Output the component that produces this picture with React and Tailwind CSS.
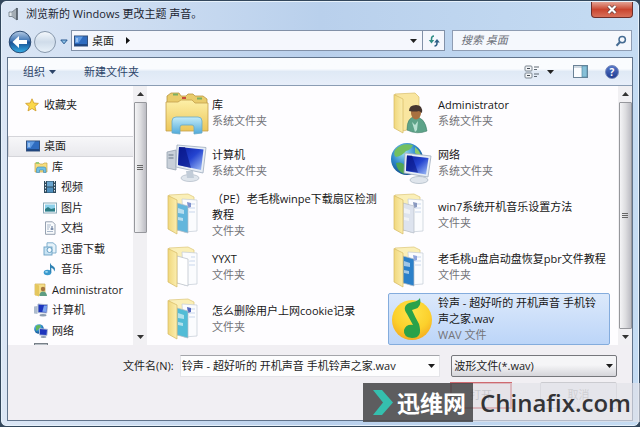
import React, { useState } from "react";

const treeItems = [
  { label: "桌面", icon: "desktop", indent: "pl-[17px]", active: true },
  { label: "库", icon: "library", indent: "pl-[26px]" },
  { label: "视频", icon: "video", indent: "pl-[35px]" },
  { label: "图片", icon: "picture", indent: "pl-[35px]" },
  { label: "文档", icon: "doc", indent: "pl-[35px]" },
  { label: "迅雷下载", icon: "download", indent: "pl-[35px]" },
  { label: "音乐", icon: "music", indent: "pl-[35px]" },
  { label: "Administrator", icon: "userSmall", indent: "pl-[26px]" },
  { label: "计算机", icon: "pcSmall", indent: "pl-[26px]" },
  { label: "网络", icon: "netSmall", indent: "pl-[26px]" },
];

const files = [
  { name: "库", type: "系统文件夹", icon: "libraries" },
  { name: "Administrator", type: "系统文件夹", icon: "user" },
  { name: "计算机", type: "系统文件夹", icon: "computer" },
  { name: "网络", type: "系统文件夹", icon: "network" },
  { name: "（PE）老毛桃winpe下载扇区检测教程", type: "文件夹", icon: "folderBlue" },
  { name: "win7系统开机音乐设置方法", type: "文件夹", icon: "folderGrey" },
  { name: "YYXT", type: "文件夹", icon: "folderPlain" },
  { name: "老毛桃u盘启动盘恢复pbr文件教程", type: "文件夹", icon: "folderDeep" },
  { name: "怎么删除用户上网cookie记录", type: "文件夹", icon: "folderCyan" },
  { name: "铃声 - 超好听的 开机声音 手机铃声之家.wav", type: "WAV 文件", icon: "wav" },
];

// Gradients shared by all of the icons
function IconDefs() {
  return (
    <svg width="0" height="0" className="absolute" aria-hidden="true">
      <defs>
        <linearGradient id="folderFront" x1="0" y1="0" x2="1" y2="0">
          <stop offset="0" stopColor="#f0d77c" />
          <stop offset="1" stopColor="#fbeeb0" />
        </linearGradient>
        <linearGradient id="folderWide" x1="0" y1="0" x2="0" y2="1">
          <stop offset="0" stopColor="#fdf0a8" />
          <stop offset="1" stopColor="#ecc65a" />
        </linearGradient>
        <linearGradient id="stand" x1="0" y1="0" x2="0" y2="1">
          <stop offset="0" stopColor="#c4ecf8" />
          <stop offset="1" stopColor="#4fa9da" />
        </linearGradient>
        <linearGradient id="screen" x1="0" y1="0" x2="1" y2="1">
          <stop offset="0" stopColor="#0b1c9e" />
          <stop offset="0.5" stopColor="#2444d0" />
          <stop offset="1" stopColor="#a6c3f8" />
        </linearGradient>
        <radialGradient id="globe" cx="0.4" cy="0.3" r="0.8">
          <stop offset="0" stopColor="#9adff5" />
          <stop offset="0.5" stopColor="#2c86c8" />
          <stop offset="1" stopColor="#0c3f7c" />
        </radialGradient>
        <radialGradient id="disc" cx="0.5" cy="0.3" r="0.75">
          <stop offset="0" stopColor="#ffe44a" />
          <stop offset="0.6" stopColor="#fcd02c" />
          <stop offset="1" stopColor="#f3a61f" />
        </radialGradient>
        <linearGradient id="backBlue" x1="0" y1="0" x2="0" y2="1">
          <stop offset="0" stopColor="#b5cbe4" />
          <stop offset="0.45" stopColor="#3f75b4" />
          <stop offset="0.5" stopColor="#1b4f92" />
          <stop offset="1" stopColor="#35b0e8" />
        </linearGradient>
        <linearGradient id="forwardGrey" x1="0" y1="0" x2="0" y2="1">
          <stop offset="0" stopColor="#f5f9fd" />
          <stop offset="0.5" stopColor="#cfdcea" />
          <stop offset="1" stopColor="#e9f2fa" />
        </linearGradient>
      </defs>
    </svg>
  );
}

function SmallIcon({ name }) {
  const shapes = {
    star: (
      <path d="M7 .8 8.8 5l4.6.4-3.5 3 1.1 4.5L7 10.5l-4 2.400 1.100-4.500-3.500-3L5.200 5z" fill="#fbd84a" stroke="#cf9a28" strokeWidth=".8" />
    ),
    desktop: (
      <>
        <rect x=".5" y="2" width="13" height="10" fill="#2f6cc0" stroke="#33507c" />
        <path d="M1 2.500h8L4.500 9H1z" fill="#5f9ae2" />
        <path d="M2 5h2M2 7h2" stroke="#d7e8fb" />
        <path d="M1 11h12" stroke="#1c3f74" strokeWidth="1.500" />
      </>
    ),
    library: (
      <>
        <path d="M1 3h4l1 1h3l1-1h3v9H1z" fill="#f6dd7d" stroke="#c5a54c" strokeWidth=".7" />
        <path d="M2 2h3v2H2z" fill="#9ccb78" />
        <path d="M2.500 12.500V9q0-2 2-2h5.500q2 0 2 2v3.500H9.500V10h-4v2.500z" fill="#71c0e4" stroke="#3a87b4" strokeWidth=".6" />
      </>
    ),
    video: (
      <>
        <rect x="1" y="1" width="12" height="12" fill="#2f4a5d" />
        <rect x="4" y="1.500" width="6" height="5" fill="#6aa5cf" />
        <rect x="4" y="7.500" width="6" height="5" fill="#4f8fbe" />
        <path d="M2.500 1v12M11.500 1v12" stroke="#dfe9ef" strokeDasharray="1.500 1.500" />
      </>
    ),
    picture: (
      <>
        <rect x=".5" y="2" width="13" height="10" fill="#fff" stroke="#8aa9b8" />
        <rect x="2" y="3.500" width="10" height="7" fill="#8dd0ea" />
        <path d="M2 10.500V8l3-2 3 2 4-1v3.500z" fill="#2c7c84" />
      </>
    ),
    doc: (
      <>
        <path d="M2.500.8h7l2.500 2.500v10H2.500z" fill="#f8fafc" stroke="#8b97a8" strokeWidth=".9" />
        <path d="M4 4h4M4 6h3M4 8h2M4 10.500h6" stroke="#a9b7ca" />
        <path d="M9 5v4M7.500 8h3" stroke="#566c92" />
      </>
    ),
    download: (
      <>
        <path d="M4 .8h6l3 2.500V11H4z" fill="#e5f2fa" stroke="#76a8c8" strokeWidth=".9" />
        <rect x="1" y="5" width="8" height="8" fill="#c9e4f4" stroke="#6aa0c4" strokeWidth=".9" />
        <circle cx="6.500" cy="8" r="2.500" fill="#f5fbff" stroke="#6aa0c4" />
      </>
    ),
    music: (
      <>
        <ellipse cx="4.500" cy="10.500" rx="3.800" ry="2.800" fill="#3b9ace" />
        <path d="M7 10.500V.8q.8 2.700 3.500 3.700 2.500 1.500.8 5Q11 6.500 8.300 5.800v4.700z" fill="#2e82b4" />
        <ellipse cx="3.500" cy="9.800" rx="1.500" ry=".9" fill="#a5dbf2" />
      </>
    ),
    userSmall: (
      <>
        <path d="M1 1h10v11H1z" fill="#f5de88" stroke="#cbab50" strokeWidth=".7" />
        <path d="M1 1l4 1.500V13.500L1 12z" fill="#e5c75e" />
        <circle cx="9" cy="6" r="2.200" fill="#a5743f" />
        <path d="M5.500 13q0-4.500 3.500-4.500t4 4.500z" fill="#5e9d83" />
      </>
    ),
    pcSmall: (
      <>
        <path d="M0 3.500 3.500 3v8L0 10.500z" fill="#aebccd" />
        <path d="M4 1l9.500.8-.8 8.200L4 9.500z" fill="#1d35bd" stroke="#a8b6ce" />
        <path d="M10 2.500 13 2.800 12.300 9l-4-.3z" fill="#7ba4ee" />
        <ellipse cx="9" cy="12.200" rx="3.500" ry="1.200" fill="#8d9db0" />
      </>
    ),
    netSmall: (
      <>
        <circle cx="5" cy="5" r="4.800" fill="url(#globe)" />
        <path d="M2 2q3-2 5 0Q5 6 2 7z" fill="#63b65a" />
        <path d="M5.500 4.500l8 .8-.6 6.200-7.400-.5z" fill="#1d35bd" stroke="#b1c0d6" strokeWidth=".9" />
        <ellipse cx="9.500" cy="13" rx="3" ry="1" fill="#8d9db0" />
      </>
    ),
  };
  return (
    <svg viewBox="0 0 14 14" className="size-[14px] shrink-0" aria-hidden="true">
      {shapes[name]}
    </svg>
  );
}

function OpenFolder({ children }) {
  return (
    <>
      <path d="M4 2 23 1 29 4V33L20 38 4 36z" fill="#faefb8" stroke="#dcc577" strokeWidth=".7" />
      {children}
      <path d="M3 2.500 12 7v34L3 36z" fill="url(#folderFront)" stroke="#d5b961" strokeWidth=".7" />
    </>
  );
}

function Pages({ front, mark }) {
  return (
    <>
      <path d="M17 6l15 1v31l-13 1z" fill="#fbfcfe" stroke="#c3ccd6" strokeWidth=".7" />
      <path d="M23 11h7M24 15h6M24 19h6" stroke="#c9d7ec" />
      <path d="M22 9l4 1v4l-3 1z" fill={mark} />
      <path d="M12 10l11 3v27l-11-3z" fill={front} stroke="#b4bcc6" strokeWidth=".7" />
      <path d="M13 15l6 2v4l-6-1zM13 24l5 1v3l-5-1z" fill="#ffffff" opacity=".55" />
    </>
  );
}

function Monitor() {
  return (
    <>
      <ellipse cx="25" cy="36" rx="9" ry="3.500" fill="#dfe5ec" stroke="#adb7c4" strokeWidth=".7" />
      <path d="M21 29h7l1 7h-7z" fill="#c2ccd8" />
      <path d="M12 3 41 5.500 38 31 11 25z" fill="#e7edf4" stroke="#9eacbe" strokeWidth=".8" />
      <path d="M14 5 38.500 7.500 36 28 13 23z" fill="url(#screen)" />
      <path d="M14 5h6l6 21-13-3z" fill="#081684" opacity=".65" />
    </>
  );
}

function LargeIcon({ name }) {
  const shapes = {
    libraries: (
      <>
        <path d="M2 4 6 1h8l2 3h5l2-2h5l2 2h8l4 3v30H2z" fill="#e9cc6c" stroke="#b99743" strokeWidth=".8" />
        <path d="M8 2.500h5M32 6.500h5" stroke="#7cb061" strokeWidth="2" />
        <path d="M17 6h4" stroke="#c94d3c" strokeWidth="2" />
        <path d="M1 10h12l3-2h11l3 3h13v28H1z" fill="url(#folderWide)" stroke="#c3a04b" strokeWidth=".8" />
        <path d="M7 41V29q0-4 4-4h22q4 0 4 4v12l-8 1v-7q0-2-2-2H17q-2 0-2 2v7z" fill="url(#stand)" stroke="#68a9c8" strokeWidth=".8" />
      </>
    ),
    user: (
      <>
        <path d="M4 2 24 1l4 4v30l-16 4z" fill="#f9e6a0" stroke="#d9bd6a" strokeWidth=".7" />
        <path d="M3 2.500 12 7v34L3 36z" fill="url(#folderFront)" stroke="#d5b961" strokeWidth=".7" />
        <path d="M16 38q0-13 8-13 10 0 12 14-10 4-20-1z" fill="#5da389" stroke="#3e7d66" strokeWidth=".6" />
        <path d="M21 30l3 3 3-4-1 9-2 2z" fill="#b9e2d3" />
        <ellipse cx="25" cy="21" rx="5" ry="6.500" fill="#a8713f" />
        <path d="M18 19q0-6 7-6t6 8l-3-2q-4 1-10 0z" fill="#46362f" />
      </>
    ),
    computer: (
      <>
        <path d="M2 10 11 8v20L2 26z" fill="#c9d0d9" stroke="#98a3b1" strokeWidth=".8" />
        <path d="M3.500 13h5M3.500 16h5" stroke="#6b7888" />
        <Monitor />
      </>
    ),
    network: (
      <>
        <circle cx="16" cy="17" r="16" fill="url(#globe)" />
        <path d="M4 8q7-8 18-5-2 5-7 6-4 5-10 6-3-2-1-7z" fill="#73bf60" />
        <path d="M5 21q6-2 9 3l-1 8q-7-3-8-11z" fill="#4fa552" />
        <path d="M24 5q6 5 6 10l-6-4z" fill="#8ccb6d" />
        <ellipse cx="28" cy="38" rx="9" ry="3.500" fill="#dfe5ec" stroke="#a5b1bf" strokeWidth=".7" />
        <path d="M14 11 40 14 37 35 13 31z" fill="#e7edf4" stroke="#9eacbe" strokeWidth=".8" />
        <path d="M16 13.500 37.500 16 35 32.500 15 29z" fill="url(#screen)" />
        <path d="M16 13.500h5l6 17-12-2z" fill="#081684" opacity=".6" />
      </>
    ),
    folderBlue: <OpenFolder><Pages front="#62b6dc" mark="#7f93cf" /></OpenFolder>,
    folderGrey: <OpenFolder><Pages front="#dde3ee" mark="#8a9ac0" /></OpenFolder>,
    folderPlain: <OpenFolder><Pages front="#ffffff" mark="#fbfcfe" /></OpenFolder>,
    folderDeep: <OpenFolder><Pages front="#2b80c9" mark="#8fa4dd" /></OpenFolder>,
    folderCyan: <OpenFolder><Pages front="#52bcd6" mark="#5468c0" /></OpenFolder>,
    wav: (
      <>
        <circle cx="21" cy="22" r="20" fill="url(#disc)" />
        <path d="M14 9q1-4 8-5 5-1 7-4 2 9-5 11l-3 1q3 7 7 14 4 14-7 14-9-1-8-8 2-6 9-5l-6-11q-3-4-2-7z" fill="#2aa24a" />
      </>
    ),
  };
  return (
    <svg viewBox="0 0 44 43" className="h-[43px] w-11 shrink-0" aria-hidden="true">
      {shapes[name]}
    </svg>
  );
}

function Caret({ className = "" }) {
  return (
    <svg viewBox="0 0 7 4" className={`h-1 w-[7px] shrink-0 ${className}`} aria-hidden="true">
      <path d="M0 0h7L3.500 4z" fill="currentColor" />
    </svg>
  );
}

function ScrollBar({ thumb }) {
  return (
    <div className="flex w-[14px] shrink-0 flex-col items-center bg-[#f1f0f3] text-[#333]">
      <button aria-label="向上滚动" className="flex h-4 w-full items-center justify-center">
        <Caret className="rotate-180" />
      </button>
      <div className={`flex w-[13px] flex-col items-center justify-center gap-px rounded-[1px] border border-[#96979c] bg-linear-to-r from-[#f4f4f6] via-[#dddde0] to-[#bcbcc3] ${thumb}`}>
        <span className="h-px w-[6px] bg-[#666]" />
        <span className="h-px w-[6px] bg-[#666]" />
        <span className="h-px w-[6px] bg-[#666]" />
      </div>
      <button aria-label="向下滚动" className="mt-auto flex h-4 w-full items-center justify-center">
        <Caret />
      </button>
    </div>
  );
}

function TitleBar() {
  return (
    <div className="flex h-7 items-start justify-between pl-px">
      <div className="flex h-6 items-center gap-[6px]">
        <svg viewBox="0 0 12 14" className="h-[14px] w-3" aria-hidden="true">
          <path d="M1 5h3l5-4v12L4 9.500H1z" fill="#a4adb5" stroke="#6f7a84" strokeWidth=".8" />
          <path d="M9 1v12" stroke="#4e5963" strokeWidth="1.500" />
          <path d="M1.500 5.500h2v3.500h-2z" fill="#e3e8ec" />
        </svg>
        <h1 className="text-[11px] leading-4 text-[#1b2430]">浏览新的 Windows 更改主题 声音。</h1>
      </div>
      <button aria-label="关闭" className="flex h-4 w-[42px] items-center justify-center rounded-b-[4px] border border-t-0 border-[#6d2f2b] bg-linear-to-b from-[#e2a193] via-[#c9452f] to-[#d8705a]">
        <svg viewBox="0 0 10 9" className="h-[9px] w-[10px]" aria-hidden="true">
          <path d="M1.500 1l7 7M8.500 1l-7 7" stroke="#5b3a3a" strokeWidth="3.500" />
          <path d="M1.500 1l7 7M8.500 1l-7 7" stroke="#fff" strokeWidth="2.200" />
        </svg>
      </button>
    </div>
  );
}

function NavBar() {
  return (
    <div className="flex h-[27px] items-start pl-px pr-px">
      <div className="mr-[3px] flex h-6 items-center">
        <button aria-label="后退">
          <svg viewBox="0 0 24 24" className="size-6" aria-hidden="true">
            <circle cx="12" cy="12" r="10.800" fill="url(#backBlue)" stroke="#2b4a72" />
            <path d="M4.500 12 11 6v4h8v4h-8v4z" fill="#fff" />
          </svg>
        </button>
        <button aria-label="前进" className="ml-px">
          <svg viewBox="0 0 24 24" className="size-6" aria-hidden="true">
            <circle cx="12" cy="12" r="10.500" fill="url(#forwardGrey)" stroke="#8798ac" />
          </svg>
        </button>
        <button aria-label="最近的位置" className="ml-[3px] text-[#24578f]">
          <svg viewBox="0 0 8 6" className="h-[6px] w-2" aria-hidden="true">
            <path d="M.8 1h6.400L4 4.800z" fill="#8fc4e8" stroke="currentColor" />
          </svg>
        </button>
      </div>
      <div className="flex h-[21px] min-w-0 grow-[372] basis-0 border border-[#8291a8] bg-[#f5f7fd]">
        <div className="flex min-w-0 flex-1 items-center gap-1 pl-[2px] text-[11px] text-[#1b1b1b]">
          <SmallIcon name="desktop" />
          <button className="leading-4">桌面</button>
          <svg viewBox="0 0 4 7" className="ml-2 h-[7px] w-1" aria-hidden="true">
            <path d="M0 0v7l4-3.500z" fill="#111" />
          </svg>
        </div>
        <button aria-label="历史位置" className="flex w-[18px] items-center justify-center text-[#222]">
          <Caret />
        </button>
        <button aria-label="刷新" className="flex w-[22px] items-center justify-center border-l border-[#8291a8]">
          <svg viewBox="0 0 12 12" className="size-3" aria-hidden="true">
            <path d="M6 1Q3.500 1 3.500 4v2" fill="none" stroke="#2e8d84" strokeWidth="1.500" />
            <path d="M.8 5h5.400L3.500 8.500z" fill="#2e8d84" />
            <path d="M6.500 11Q9 11 9 8V7" fill="none" stroke="#2d5f86" strokeWidth="1.500" />
            <path d="M6.200 7.500h5.600L9 4z" fill="#2d5f86" />
          </svg>
        </button>
      </div>
      <div className="ml-[7px] flex h-[21px] min-w-0 grow-[166] basis-0 items-center border border-[#8f9db3] bg-[#f5f8fd] pl-2 pr-1">
        <input
          type="search"
          aria-label="搜索 桌面"
          placeholder="搜索 桌面"
          className="w-full min-w-0 bg-transparent text-[11px] italic outline-none placeholder:text-[#6b6f78]"
        />
        <button aria-label="搜索">
          <svg viewBox="0 0 12 12" className="size-3" aria-hidden="true">
            <circle cx="7.200" cy="4.600" r="3.200" fill="none" stroke="#456c93" strokeWidth="1.500" />
            <path d="M5 7 1.500 10.800" stroke="#456c93" strokeWidth="2" />
          </svg>
        </button>
      </div>
    </div>
  );
}

function ToolBar() {
  return (
    <div className="flex h-7 items-center border-b border-[#8b9db4] bg-linear-to-b from-[#fafcfe] from-40% via-[#dfe9f5] via-50% to-[#e8effa] pl-[15px] pr-[13px] text-[11px] leading-4 text-[#2c4468]">
      <button className="flex items-center gap-1">
        组织 <Caret />
      </button>
      <button className="ml-7">新建文件夹</button>
      <button aria-label="更改视图" className="ml-auto">
        <svg viewBox="0 0 16 14" className="h-[14px] w-4" aria-hidden="true">
          <rect x="1" y="1" width="7" height="5" rx="1" fill="#f3f5f7" stroke="#7c8791" />
          <rect x="1" y="8" width="7" height="5" rx="1" fill="#f3f5f7" stroke="#7c8791" />
          <path d="M3 3.500h3M3 10.500h3" stroke="#444d57" />
          <path d="M10 2h5M10 4.500h3M10 9h5M10 11.500h3" stroke="#5e6872" />
        </svg>
      </button>
      <button aria-label="更多视图选项" className="ml-[7px] flex h-4 items-center text-[#222]">
        <Caret />
      </button>
      <button aria-label="显示预览窗格" className="ml-[19px]">
        <svg viewBox="0 0 15 13" className="h-[13px] w-[15px]" aria-hidden="true">
          <rect x=".5" y=".5" width="14" height="12" fill="#fbfdff" stroke="#6a8296" />
          <path d="M1 2h9" stroke="#a5b6c4" />
          <rect x="9" y="1" width="5" height="11" fill="#86c0d8" stroke="#5589a3" strokeWidth=".7" />
        </svg>
      </button>
      <button aria-label="获取帮助" className="ml-[17px] flex size-[14px] items-center justify-center rounded-full border border-[#7487b9] bg-linear-to-b from-[#5677c8] to-[#1f3b92] text-[10px] font-bold leading-3 text-white">
        ?
      </button>
    </div>
  );
}

function Sidebar() {
  return (
    <nav aria-label="导航窗格" className="h-[259px] w-[125px] shrink-0 overflow-hidden text-[11px] leading-4 text-[#1c1c1c]">
      <a href="#favorites" className="flex h-[38px] items-center gap-[5px] pl-[17px]">
        <SmallIcon name="star" />
        收藏夹
      </a>
      <ul className="mt-3 flex h-[205px] flex-col">
        {treeItems.map((item) => (
          <li key={item.label} className="flex min-h-0 flex-1">
            <a
              href={"#" + item.icon}
              className={`flex w-full items-center gap-1 whitespace-nowrap ${item.indent} ${
                item.active ? "border-y border-l border-[#d5d5da] bg-linear-to-b from-[#f7f7f9] to-[#e9e9ed]" : ""
              }`}
            >
              <SmallIcon name={item.icon} />
              {item.label}
            </a>
          </li>
        ))}
      </ul>
      <div className="ml-[26px] mt-[2px] h-1 w-[14px] border border-[#777f87] bg-[#b8bfc5]" />
    </nav>
  );
}

function FileList({ selected, onSelect }) {
  return (
    <ul className="grid min-w-0 flex-1 grid-cols-2 grid-rows-[50px_50px_53px_52px_52px] gap-x-1 pl-[15px] pr-2 pt-[2px]">
      {files.map((file) => (
        <li key={file.name} className="flex min-w-0">
          <button
            onClick={() => onSelect(file.name)}
            className={`flex w-full min-w-0 items-center gap-[3px] rounded-[2px] border pl-[2px] pr-[3px] text-left text-[11px] leading-4 ${
              selected === file.name
                ? "border-[#84acdd] bg-linear-to-b from-[#dce9fb] to-[#bcd5f8]"
                : "border-transparent"
            }`}
          >
            <LargeIcon name={file.icon} />
            <span className="min-w-0">
              <span className="block text-[#161616]">{file.name}</span>
              <span className="block text-[#737378]">{file.type}</span>
            </span>
          </button>
        </li>
      ))}
    </ul>
  );
}

function Footer({ fileName, onChange }) {
  return (
    <div className="flex-1 bg-[#f1eff3] pl-[115px] pr-[15px] pt-[10px] text-[11px] text-[#1c1c1c]">
      <div className="flex items-center">
        <label htmlFor="file-name" className="shrink-0 whitespace-nowrap">文件名(N):</label>
        <div className="ml-[6px] flex h-[22px] min-w-0 grow-[262] basis-0 items-center border border-[#e4e4e8] border-t-[#a4a5aa] bg-[#fdfdfe]">
          <input
            id="file-name"
            type="text"
            value={fileName}
            onChange={(e) => onChange(e.target.value)}
            className="w-full min-w-0 bg-transparent pl-px outline-none"
          />
          <button aria-label="以前的文件名" className="flex h-full w-4 shrink-0 items-center justify-center">
            <Caret />
          </button>
        </div>
        <div className="relative ml-[11px] h-[22px] min-w-0 grow-[168] basis-0">
          <select aria-label="文件类型" className="size-full appearance-none rounded-[2px] border border-[#76777c] bg-linear-to-b from-[#f5f5f7] from-45% to-[#d5d5da] pl-[2px] outline-none">
            <option>波形文件(*.wav)</option>
          </select>
          <Caret className="pointer-events-none absolute right-1 top-[9px]" />
        </div>
      </div>
      <div className="mt-[5px] flex justify-end gap-7">
        <button className="h-[27px] w-[62px] border-2 border-[#cf6a70] bg-[#eee5e9] text-[#999]">打开</button>
        <button className="h-[27px] w-[77px] rounded-[2px] border border-[#cbcbd0] bg-[#ececef] text-[#aaa]">取消</button>
      </div>
    </div>
  );
}

function Watermark() {
  return (
    <div className="pointer-events-none absolute bottom-[5px] right-0 flex h-[39px] items-stretch">
      <div className="flex w-[110px] items-center gap-1 bg-[#4c4c4f]/90 pl-[10px] text-[23px] font-bold leading-8 text-white">
        <svg viewBox="0 0 20 25" className="h-[25px] w-5 shrink-0" aria-hidden="true">
          <path d="M0 0h9l11 12.500L9 25H0l10-12.500z" fill="#35bfae" />
        </svg>
        <span className="whitespace-nowrap">迅维网</span>
      </div>
      <div className="flex w-[167px] items-center bg-[#e2e2e8]/65 pl-[7px] font-['Open_Sans','Noto_Sans',sans-serif] text-[24px] font-semibold leading-8 text-[#333336]">
        Chinafix.com
      </div>
    </div>
  );
}

function App() {
  const [selected, setSelected] = useState(files[9].name);
  const [fileName, setFileName] = useState(files[9].name);

  const handleSelect = (name) => {
    setSelected(name);
    setFileName(name);
  };

  return (
    <div className="relative flex min-h-screen flex-col bg-[#33475c] font-['Open_Sans','Noto_Sans_CJK_SC',sans-serif]">
      <IconDefs />
      <div className="m-px flex flex-1 flex-col rounded-[5px] border border-[#e6f1fb] bg-linear-to-r from-[#dbe6f5] via-[#b9d0ec] to-[#c5dcf3] px-[5px] pb-1">
        <TitleBar />
        <NavBar />
        <main className="flex flex-1 flex-col border border-[#61748c] bg-white">
          <ToolBar />
          <div className="flex bg-[#fefdff]">
            <Sidebar />
            <ScrollBar thumb="h-[131px]" />
            <FileList selected={selected} onSelect={handleSelect} />
            <ScrollBar thumb="h-[227px]" />
          </div>
          <Footer fileName={fileName} onChange={setFileName} />
        </main>
      </div>
      <Watermark />
    </div>
  );
}

export default App;
